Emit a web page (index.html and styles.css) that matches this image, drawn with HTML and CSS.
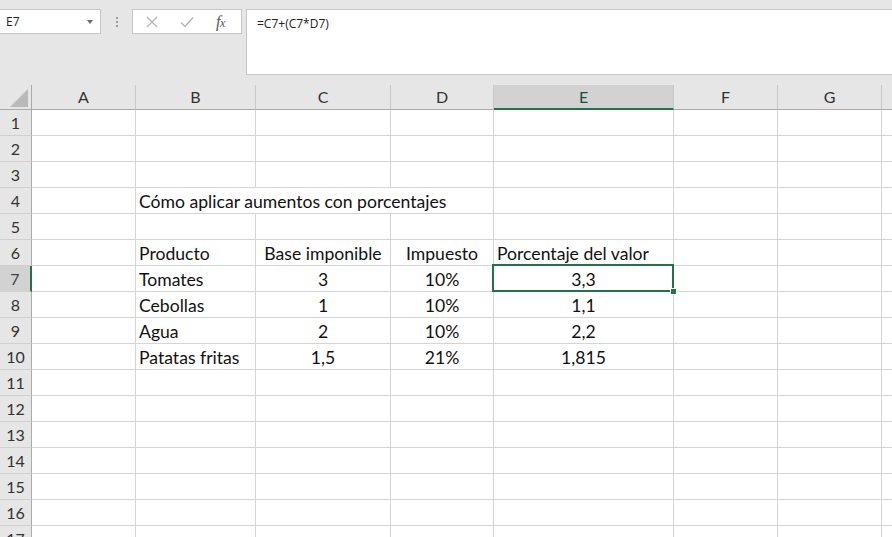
FILE: index.html
```html
<!DOCTYPE html>
<html lang="es">
<head>
  <meta charset="UTF-8">
  <title>Libro1 - Excel</title>
  <link rel="stylesheet" href="styles.css">
</head>
<body>
  <div class="app">
    <!-- barra de fórmulas -->
    <div class="toolbar">
      <div class="namebox">
        <span>E7</span>
        <span class="caret"></span>
      </div>
      <div class="grip"><i></i><i></i><i></i></div>
      <div class="fbuttons">
        <svg class="ico" viewBox="0 0 12 12" width="12" height="12">
          <path d="M1 1L11 11M11 1L1 11" stroke="#b4b4b4" stroke-width="1.3" fill="none"/>
        </svg>
        <svg class="ico" viewBox="0 0 14 12" width="14" height="12">
          <path d="M1 6.5L5 10.5L13 1.5" stroke="#b4b4b4" stroke-width="1.4" fill="none"/>
        </svg>
        <span class="fx">f<small>x</small></span>
      </div>
      <div class="formula">=C7+(C7*D7)</div>
    </div>

    <!-- hoja -->
    <div class="sheet"></div>
  </div>

  <script>
    // la columna H queda casi fuera de la ventana, su letra no se ve
    const cols = ['A', 'B', 'C', 'D', 'E', 'F', 'G', 'H'];
    // celdas con contenido: [texto, clase]
    const data = {
      4: { B: ['Cómo aplicar aumentos con porcentajes', 'span3'] },
      6: { B: ['Producto'], C: ['Base imponible', 'center'], D: ['Impuesto', 'center'], E: ['Porcentaje del valor'] },
      7: { B: ['Tomates'], C: ['3', 'center'], D: ['10%', 'center'], E: ['3,3', 'center active'] },
      8: { B: ['Cebollas'], C: ['1', 'center'], D: ['10%', 'center'], E: ['1,1', 'center'] },
      9: { B: ['Agua'], C: ['2', 'center'], D: ['10%', 'center'], E: ['2,2', 'center'] },
      10: { B: ['Patatas fritas'], C: ['1,5', 'center'], D: ['21%', 'center'], E: ['1,815', 'center'] }
    };

    const sheet = document.querySelector('.sheet');
    let h = '<div class="corner"><span></span></div>';
    cols.forEach(c => {
      h += `<div class="colhead${c === 'E' ? ' sel' : ''}">${c === 'H' ? '' : c}</div>`;
    });
    for (let r = 1; r <= 17; r++) {
      h += `<div class="rowhead${r === 7 ? ' sel' : ''}">${r}</div>`;
      const row = data[r] || {};
      let skip = 0;
      cols.forEach(c => {
        if (skip > 0) { skip--; return; }
        const cell = row[c];
        if (!cell) { h += '<div class="cell"></div>'; return; }
        const cls = cell[1] || '';
        if (cls.includes('span3')) skip = 2;
        h += `<div class="cell ${cls}">${cell[0]}</div>`;
      });
    }
    sheet.innerHTML = h;
  </script>
</body>
</html>
```

FILE: styles.css
```css
/* base */
body {
  margin: 0;
  padding: 0;
  overflow: hidden;
  background: #fff;
}
.app {
  width: 892px;
  height: 537px;
  overflow: hidden;
}

/* barra de fórmulas */
.toolbar {
  height: 85px;
  box-sizing: border-box;
  padding-top: 9px;
  background: #e6e6e6;
  display: flex;
  align-items: flex-start;
  font-family: "Open Sans", "Noto Sans", sans-serif;
  font-size: 12px;
  color: #222;
}
.namebox {
  width: 101px;
  height: 25px;
  box-sizing: border-box;
  background: #fff;
  border: 1px solid #c6c6c6;
  border-left: none;
  display: flex;
  align-items: center;
  justify-content: space-between;
  padding: 0 7px 1px 6px;
}
.caret {
  width: 0;
  height: 0;
  border-left: 3.5px solid transparent;
  border-right: 3.5px solid transparent;
  border-top: 4px solid #6b6b6b;
  margin-top: 1px;
}
.grip {
  width: 31px;
  height: 25px;
  display: flex;
  flex-direction: column;
  align-items: center;
  justify-content: center;
  gap: 2px;
}
.grip i {
  width: 2px;
  height: 2px;
  background: #9c9c9c;
}
.fbuttons {
  width: 110px;
  height: 25px;
  box-sizing: border-box;
  background: #fff;
  border: 1px solid #c6c6c6;
  display: flex;
  align-items: center;
  padding-left: 13px;
}
.fbuttons .ico {
  margin-right: 22px;
}
.fx {
  font-family: "Liberation Serif", "DejaVu Serif", serif;
  font-style: italic;
  font-size: 16px;
  color: #555;
  letter-spacing: -0.5px;
}
.fx small {
  font-size: 12px;
}
.formula {
  flex: 1;
  height: 66px;
  margin-left: 4px;
  box-sizing: border-box;
  background: #fff;
  border: 1px solid #c6c6c6;
  border-right: none;
  padding: 5px 0 0 10px;
}

/* hoja */
.sheet {
  display: grid;
  grid-template-columns: 32px 104px 120px 135px 103px 180px 104px 104px 104px;
  grid-template-rows: 25px;
  grid-auto-rows: 26px;
  font-family: Lato, "Liberation Sans", sans-serif;
}
.corner,
.colhead,
.rowhead {
  box-sizing: border-box;
  background: #e6e6e6;
  color: #333;
  font-size: 16px;
  text-align: center;
}
.corner {
  border-right: 1px solid #ababab;
  border-bottom: 1px solid #ababab;
  position: relative;
}
.corner span {
  position: absolute;
  right: 3px;
  bottom: 2px;
  width: 0;
  height: 0;
  border-left: 18px solid transparent;
  border-bottom: 18px solid #b9b9b9;
}
.colhead {
  border-right: 1px solid #c8c8c8;
  border-bottom: 1px solid #ababab;
  line-height: 24px;
}
.colhead.sel {
  background: #d2d2d2;
  border-bottom: 2px solid #217346;
  color: #1e4d35;
}
.rowhead {
  border-right: 1px solid #ababab;
  border-bottom: 1px solid #d0d0d0;
  line-height: 26px;
}
.rowhead.sel {
  background: #d2d2d2;
  border-right: 2px solid #217346;
  color: #444;
}
.cell {
  box-sizing: border-box;
  border-right: 1px solid #d4d4d4;
  border-bottom: 1px solid #d4d4d4;
  padding: 0 3px;
  font-size: 17.6px;
  line-height: 27px;
  color: #111;
  white-space: nowrap;
}
.center {
  text-align: center;
}
.span3 {
  grid-column: span 3;
}
.active {
  position: relative;
}
.active::after {
  content: "";
  position: absolute;
  left: -2px;
  top: -2px;
  right: -1px;
  bottom: -1px;
  border: 2px solid #217346;
}
.active::before {
  content: "";
  position: absolute;
  right: -4px;
  bottom: -4px;
  width: 5px;
  height: 5px;
  background: #217346;
  border: 1px solid #fff;
  z-index: 1;
}
```
